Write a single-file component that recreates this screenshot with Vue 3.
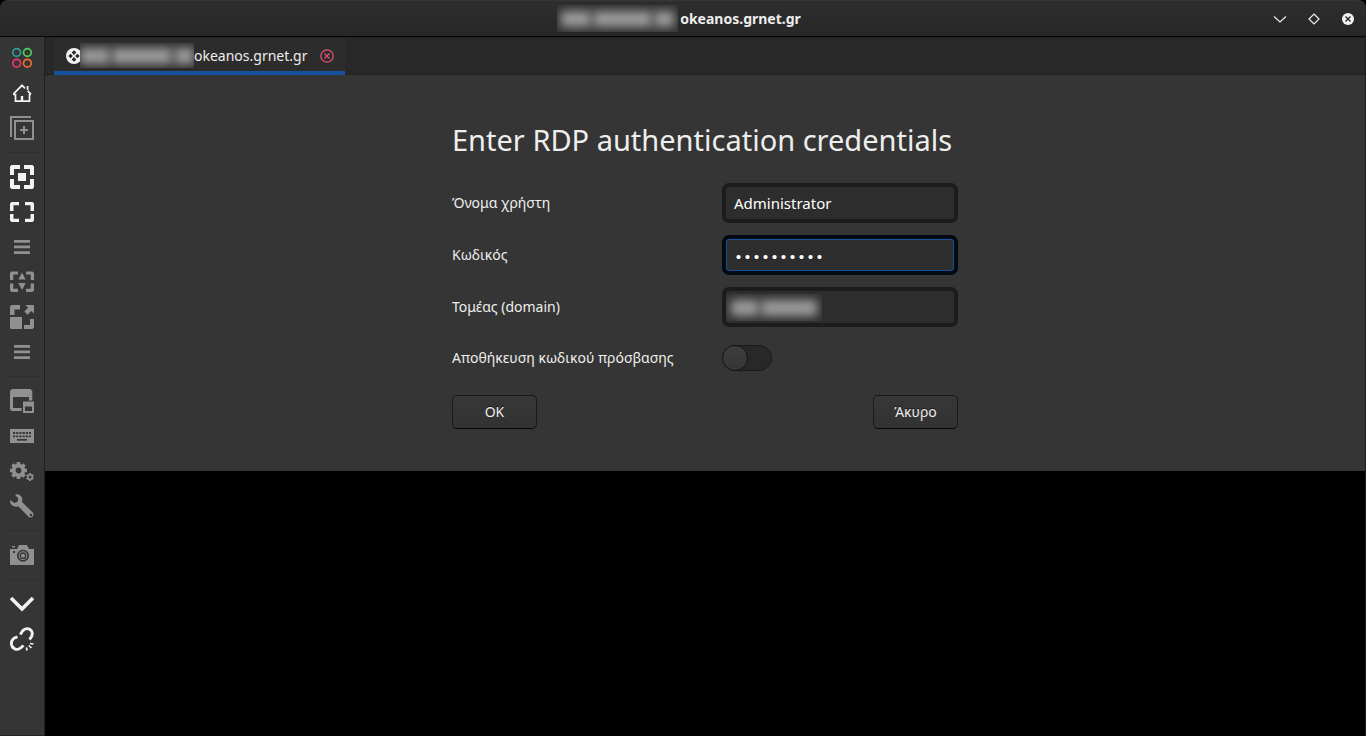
<script setup>
import { ref } from 'vue'

const host = 'okeanos.grnet.gr'
const username = ref('Administrator')
const password = ref('0123456789')
const domain = ref('')
const savePassword = ref(false)
const bigTeeth = [0, 45, 90, 135]
const smallTeeth = [0, 60, 120]
</script>

<template>
  <div class="window">
    <header class="titlebar">
      <h1 class="title">
        <span class="smudge title-smudge"><i class="w3"></i><i class="w6"></i><i class="w2"></i></span>
        <span>{{ host }}</span>
      </h1>
      <div class="controls">
        <button type="button" aria-label="Minimize">
          <svg width="16" height="16" viewBox="0 0 16 16"><path d="M2 5.500L8 11L14 5.500" fill="none" stroke="#eeeeec" stroke-width="1.2" /></svg>
        </button>
        <button type="button" aria-label="Maximize">
          <svg width="16" height="16" viewBox="0 0 16 16"><path d="M8 3L13 8L8 13L3 8Z" fill="none" stroke="#eeeeec" stroke-width="1.2" /></svg>
        </button>
        <button type="button" aria-label="Close">
          <svg width="16" height="16" viewBox="0 0 16 16"><circle cx="8" cy="8" r="6" fill="#f2f2f0" /><path d="M5.500 5.500L10.500 10.500M10.500 5.500L5.500 10.500" stroke="#292929" stroke-width="1.4" /></svg>
        </button>
      </div>
    </header>

    <div class="body">
      <nav class="sidebar" aria-label="Toolbar">
        <button type="button" aria-label="Menu">
          <svg viewBox="0 0 24 24" fill="none" stroke-width="1.7">
            <circle cx="6.700" cy="6.500" r="3.900" stroke="#2aa198" /><circle cx="17.400" cy="6.500" r="3.900" stroke="#4dce5d" />
            <circle cx="6.700" cy="17.200" r="3.900" stroke="#ee3565" /><circle cx="17.400" cy="17.200" r="3.900" stroke="#ee6c34" />
          </svg>
        </button>
        <button type="button" aria-label="Home">
          <svg viewBox="0 0 24 24" fill="none" stroke="#f2f2f0" stroke-width="1.7">
            <path d="M3 13.500H5.500V20.200H19.500V13.500H21M3.500 12.800L12 4.300L15 7.300M17.600 9.800L21 13.200M17.600 5V9" /><path d="M10.800 15H13.200V20H10.800Z" fill="#f2f2f0" stroke="none" />
          </svg>
        </button>
        <button type="button" aria-label="Duplicate connection">
          <svg viewBox="0 0 24 24" fill="none" stroke="#90908e" stroke-width="2"><path d="M1 21V1H21M5 5H23V23H5ZM14 10V18M10 14H18" /></svg>
        </button>
        <hr />
        <button type="button" aria-label="Fit window">
          <svg viewBox="0 0 24 24" fill="#f2f2f0"><path d="M1.500 0H10V4H4V10H0V1.500ZM14 0H22.500L24 1.500V10H20V4H14ZM0 14H4V20H10V24H1.500L0 22.500ZM20 14H24V22.500L22.500 24H14V20H20ZM8 8H16V16H8Z" /></svg>
        </button>
        <button type="button" aria-label="Fullscreen">
          <svg viewBox="0 0 24 24" fill="#f2f2f0"><path d="M1.500 2H9V5.300H3.500V11H0V3.500ZM15 2H22.500L24 3.500V11H20.500V5.300H15ZM0 14H3.500V18.700H9V22H1.500L0 20.500ZM20.500 14H24V20.500L22.500 22H15V18.700H20.500Z" /></svg>
        </button>
        <button type="button" aria-label="Fullscreen options">
          <svg viewBox="0 0 24 24" fill="#90908e"><path d="M4 5H20V7.700H4ZM4 10.600H20V13.300H4ZM4 16.200H20V18.900H4Z" /></svg>
        </button>
        <button type="button" aria-label="Dynamic resolution">
          <svg viewBox="0 0 24 24" fill="#90908e"><path d="M1.500 1.500H8V4.500H3.300V10H0V3ZM16 1.500H22.500L24 3V10H20.700V4.500H16ZM0 13.500H3.300V18.700H8V22H1.500L0 20.500ZM20.700 13.500H24V20.500L22.500 22H16V18.700H20.700ZM12 2.500L15.700 9.500H8.300ZM8.300 13H15.700L12 20Z" /></svg>
        </button>
        <button type="button" aria-label="Scaled mode">
          <svg viewBox="0 0 24 24" fill="#90908e"><path d="M1.500 0H10V4.500H4.500V10H0V1.500ZM0 12H12V24H1L0 23ZM20 14H24V22.500L22.500 24H14V20H20ZM15.500 0H24V8.500L21.300 6L17.500 9.800L14.300 6.500L18 2.700Z" /></svg>
        </button>
        <button type="button" aria-label="Scale options">
          <svg viewBox="0 0 24 24" fill="#90908e"><path d="M4 5H20V7.700H4ZM4 10.600H20V13.300H4ZM4 16.200H20V18.900H4Z" /></svg>
        </button>
        <hr />
        <button type="button" aria-label="Multi monitor">
          <svg viewBox="0 0 24 24" fill="#90908e" fill-rule="evenodd"><path d="M2 0H20.500L22.300 2V11.500H19V8H3V19H11.700V22H1.500L0 20.500V2ZM13 12.500H24V24H13ZM15 17.500V22H22V17.500Z" /></svg>
        </button>
        <button type="button" aria-label="Keyboard">
          <svg viewBox="0 0 24 24" fill="#90908e" fill-rule="evenodd"><path d="M0 5H24V19H0Z" /><path d="M3 9H21M3 12.300H21" stroke="#353535" stroke-width="1.800" stroke-dasharray="2.200 1" /><path d="M7 15H17V16.700H7Z" fill="#353535" /></svg>
        </button>
        <button type="button" aria-label="Preferences">
          <svg viewBox="0 0 24 24" fill="none" stroke="#90908e">
            <path v-for="a in bigTeeth" :key="'b' + a" d="M8.500 3V6M8.500 17V20" stroke-width="3.600" :transform="`rotate(${a} 8.500 11.500)`" />
            <circle cx="8.500" cy="11.500" r="4.800" stroke-width="3.800" />
            <path v-for="a in smallTeeth" :key="'s' + a" d="M20 14V15.500M20 20.500V22" stroke-width="2" :transform="`rotate(${a} 20 18)`" />
            <circle cx="20" cy="18" r="2.300" stroke-width="1.600" />
          </svg>
        </button>
        <button type="button" aria-label="Tools">
          <svg viewBox="0 0 24 24" fill="#90908e" fill-rule="evenodd"><path d="M5 .5C8 -.5 12 1.500 12.300 5L12 8L22.800 18.600C25 21 22 25 18.800 23L8.500 12.500C5 13.500 1.500 12 .3 9L0 6L4.500 9L7.800 7.500L8.200 4.500ZM21 19.700A1.300 1.300 0 1 0 21 22.300A1.300 1.300 0 1 0 21 19.700Z" /></svg>
        </button>
        <hr />
        <button type="button" aria-label="Screenshot">
          <svg viewBox="0 0 24 24" fill="#90908e"><path d="M0 6H7L9 2H17L19 6H24V22H0ZM2 3H5V4.500H2Z" /><path d="M3 8H5V10H3Z" fill="#353535" /><circle cx="13" cy="12.700" r="5.200" fill="none" stroke="#353535" stroke-width="1.700" /><circle cx="13" cy="12.700" r="2.700" fill="none" stroke="#353535" stroke-width="1.300" /></svg>
        </button>
        <hr />
        <button type="button" aria-label="Collapse">
          <svg viewBox="0 0 24 24" fill="none" stroke="#f2f2f0" stroke-width="3.600"><path d="M1 6L12 17L23 6" /></svg>
        </button>
        <button type="button" aria-label="Disconnect">
          <svg viewBox="0 0 24 24" fill="none" stroke="#f2f2f0" stroke-width="2.900">
            <path d="M10.300 7.500L12.500 4C15 .8 19.500 .8 21.500 4C23.300 7 22.300 9.500 19.500 12.500M7.500 10C3.500 10.500 1 13.500 1.500 17.500C2.500 22.500 7.500 23.500 10.500 21L13.500 18.500" /><path d="M16.500 20.500L17 23.500M18.800 18.500L21.500 21M20 16.500L23.500 17" stroke-width="1.700" />
          </svg>
        </button>
      </nav>

      <main class="main">
        <div class="tabs">
          <div class="tab">
            <svg class="tab-icon" viewBox="0 0 16 16"><circle cx="8" cy="8" r="8" fill="#f2f2f0" /><path d="M8 2.300L10.300 4.600L8 6.900L5.700 4.600ZM8 9.100L10.300 11.400L8 13.700L5.700 11.400ZM4.600 5.700L6.900 8L4.600 10.300L2.300 8ZM11.400 5.700L13.700 8L11.400 10.300L9.100 8Z" fill="#292929" /></svg>
            <span class="smudge tab-smudge"><i class="w3"></i><i class="w6"></i><i class="w2"></i></span>
            <span class="tab-name">{{ host }}</span>
            <button type="button" class="tab-close" aria-label="Close tab">
              <svg width="14" height="14" viewBox="0 0 14 14" fill="none" stroke="#e0506e" stroke-width="1.300"><circle cx="7" cy="7" r="6.200" /><path d="M4.500 4.500L9.500 9.500M9.500 4.500L4.500 9.500" /></svg>
            </button>
          </div>
        </div>

        <section class="panel">
          <form class="form" @submit.prevent>
            <h2>Enter RDP authentication credentials</h2>
            <div class="row">
              <label for="user">Όνομα χρήστη</label>
              <input id="user" v-model="username" class="field" type="text" />
            </div>
            <div class="row">
              <label for="pass">Κωδικός</label>
              <input id="pass" v-model="password" class="field active" type="password" />
            </div>
            <div class="row">
              <label for="domain">Τομέας (domain)</label>
              <div class="domain">
                <input id="domain" v-model="domain" class="field" type="text" />
                <span class="smudge domain-smudge"><i class="w3"></i><i class="w6"></i></span>
              </div>
            </div>
            <div class="row switch-row">
              <label for="save">Αποθήκευση κωδικού πρόσβασης</label>
              <input id="save" v-model="savePassword" class="switch" type="checkbox" role="switch" />
            </div>
            <div class="actions">
              <button type="submit">OK</button>
              <button type="button">Άκυρο</button>
            </div>
          </form>
        </section>
      </main>
    </div>
  </div>
</template>

<style>
html,
body {
  background: #000;
}
</style>

<style scoped>
* {
  box-sizing: border-box;
}

.window {
  display: flex;
  flex-direction: column;
  min-height: 100vh;
  color: #eeeeec;
  font: 14px/20px "Comic Sans MS", "Noto Sans", sans-serif;
}

button {
  padding: 0;
  border: 0;
  background: none;
  color: inherit;
  font: inherit;
}

svg {
  display: block;
}

.titlebar {
  display: grid;
  grid-template-columns: 1fr auto 1fr;
  align-items: center;
  height: 37px;
  border-top: 1px solid #363636;
  border-bottom: 1px solid #060606;
  border-radius: 8px 8px 0 0;
  background: linear-gradient(#2e2e2e, #272727);
}

.title {
  grid-column: 2;
  display: flex;
  align-items: center;
  gap: 2px;
  margin: 0;
  padding-right: 8px;
  font-size: 14px;
  font-weight: 700;
}

.controls {
  display: flex;
  justify-content: flex-end;
  gap: 18px;
  padding-right: 10px;
}

.smudge {
  display: flex;
  align-items: center;
  gap: 2px;
  overflow: hidden;
  background: #323232;
}

.smudge i {
  height: 16px;
  background: #9a9a9a;
  filter: blur(5px);
}

.w2 { flex: 2; }
.w3 { flex: 3; }
.w6 { flex: 6; }

.title-smudge {
  width: 121px;
  height: 27px;
  padding: 0 4px;
}

.body {
  display: flex;
  flex: 1;
}

.sidebar {
  flex: none;
  display: flex;
  flex-direction: column;
  width: 45px;
  padding-top: 3px;
  border-right: 1px solid #1f1f1f;
  border-bottom: 1px solid #242424;
  background: #353535;
}

.sidebar button {
  padding: 6px 10px 5px;
}

.sidebar svg {
  width: 24px;
  height: 24px;
}

.sidebar hr {
  width: 36px;
  height: 1px;
  margin: 7px 4px 6px;
  border: 0;
  background: #2e2e2e;
}

.main {
  flex: 1;
  border-right: 1px solid #1f1f1f;
}

.tabs {
  display: flex;
  height: 38px;
  padding-left: 9px;
  border-top: 1px solid #202020;
  border-bottom: 1px solid #202020;
  background: #282828;
}

.tab {
  display: flex;
  align-items: center;
  height: 37px;
  padding: 2px 11px 0 12px;
  border-bottom: 4px solid #15539e;
  background: #2c2c2c;
}

.tab-icon {
  width: 16px;
  height: 16px;
}

.tab-smudge {
  width: 114px;
  height: 25px;
  margin-left: -2px;
}

.tab-close {
  margin-left: 13px;
}

.panel {
  padding: 45px 24px 42px;
  background: #353535;
}

.form {
  width: 506px;
  max-width: 100%;
  margin: 0 auto;
}

h2 {
  margin: 0 0 23px;
  font-size: 29px;
  font-weight: 400;
  line-height: 40px;
  white-space: nowrap;
}

.row {
  display: grid;
  grid-template-columns: 1fr 236px;
  align-items: center;
  margin-bottom: 12px;
}

.field {
  display: block;
  width: 100%;
  height: 40px;
  padding: 0 8px;
  border: 4px solid #1c1c1c;
  border-radius: 7px;
  outline: 0;
  background: #2d2d2d;
  color: #fff;
  font: inherit;
  font-size: 15px;
}

.field.active {
  padding-top: 7px;
  border-color: #030a14;
  box-shadow: inset 0 0 0 1px #15539e;
  font-family: "Liberation Mono", monospace;
}

.domain {
  position: relative;
}

.domain-smudge {
  position: absolute;
  top: 7px;
  left: 4px;
  width: 96px;
  height: 27px;
  padding: 0 5px;
}

.switch-row {
  height: 38px;
  margin-bottom: 18px;
}

.switch {
  appearance: none;
  width: 50px;
  height: 26px;
  margin: 0;
  border: 1px solid #1b1b1b;
  border-radius: 13px;
  background: #282828;
}

.switch::before {
  content: "";
  display: block;
  width: 24px;
  height: 24px;
  margin: -1px;
  border: 1px solid #171717;
  border-radius: 50%;
  background: linear-gradient(#3d3d3d, #353535);
}

.switch:checked {
  background: #15539e;
}

.switch:checked::before {
  margin-left: 23px;
}

.actions {
  display: flex;
  justify-content: space-between;
}

.actions button {
  width: 85px;
  height: 34px;
  border: 1px solid #1b1b1b;
  border-bottom-color: #070707;
  border-radius: 5px;
  background: linear-gradient(#373737, #323232);
  text-shadow: 0 -1px #151515;
}
</style>
